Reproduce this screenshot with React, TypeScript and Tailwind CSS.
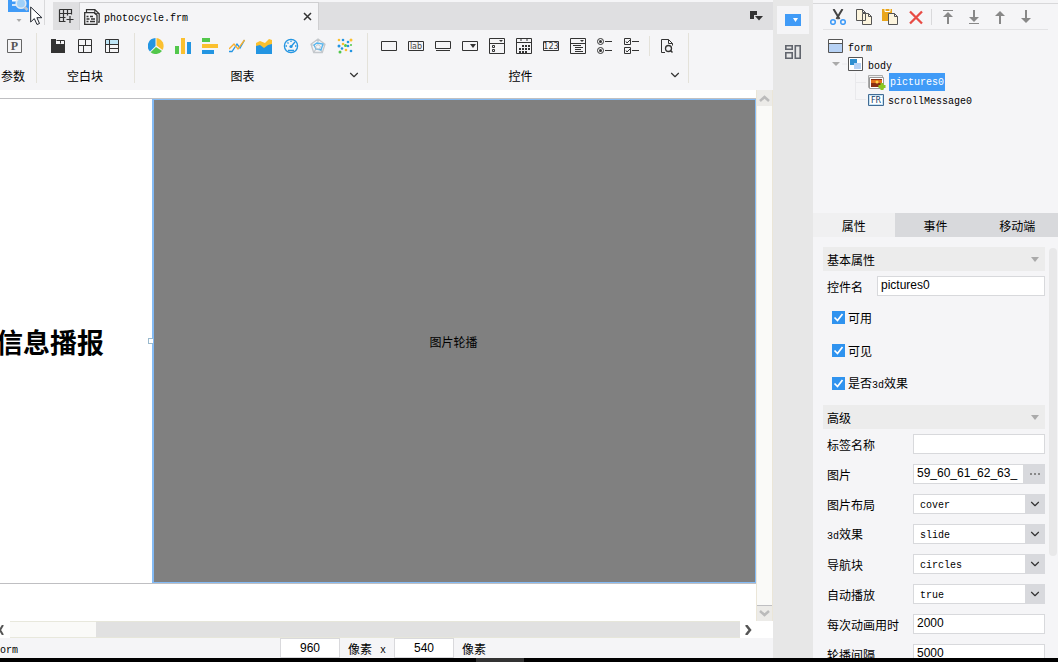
import React from "react";
import { ChevronDown } from "lucide-react";

type Kids = { children: React.ReactNode };

const Icon = ({ children }: Kids) => (
  <svg width="16" height="16" viewBox="0 0 16 16" fill="none" stroke="#333" className="block shrink-0">
    {children}
  </svg>
);

const Tool = ({ label, children }: Kids & { label: string }) => (
  <button type="button" aria-label={label} className="block size-4 shrink-0">
    <Icon>{children}</Icon>
  </button>
);

const Mono = ({ children }: Kids) => (
  <span className="font-['Liberation_Mono',monospace] text-[10px]">{children}</span>
);

function TopBar() {
  return (
    <div className="flex h-[30px] pt-0.5">
      <div className="relative -mt-0.5 flex w-[53px] shrink-0">
        <button type="button" aria-label="预览" className="ml-2 h-[23px] w-[21px]">
          <svg width="21" height="23" viewBox="0 0 21 23" className="block">
            <path d="M0 0h21v12H0z" fill="#409bf7" />
            <path d="M4 .8h6M4 5h6" stroke="#fff" strokeWidth="1.600" />
            <circle cx="13" cy="3.500" r="4.800" fill="#9fd0f8" stroke="#dfe9f2" strokeWidth="1.600" />
            <path d="M16.500 7l3 3" stroke="#b9c6d2" strokeWidth="2.500" />
            <path d="M8.500 19h5L11 22z" fill="#aaa" />
          </svg>
        </button>
        <div className="ml-[15px] h-[25px] w-px bg-[#d9d9db]" />
        <svg width="13" height="20" viewBox="0 0 13 20" className="absolute top-1.5 left-[30px]">
          <path d="M.7 1v15l3.600-3.400L7 18.500l2.500-1-2.600-5.800h5z" fill="#fff" stroke="#20252e" />
        </svg>
      </div>
      <button type="button" aria-label="新建" className="flex w-[26px] items-center justify-center bg-[#dfdfe1]">
        <Icon>
          <path d="M1.500 1.500h12v5M1.500 1.500v12h6M1.500 5.500h12M1.500 9.500h6M5.500 1.500v12M9.500 1.500v6M8.500 11.500h7M12 8v7" strokeWidth="1.200" />
        </Icon>
      </button>
      <div className="flex w-60 items-center border-x border-t border-[#cfcfd1] bg-[#f5f5f7] px-1">
        <Icon>
          <path d="M2.500 3V.7h8.300l4.400 4v8.500H14" strokeWidth="1.200" />
          <path d="M.7 3.700h9.500l2.800 2.600v9H.7z" strokeWidth="1.300" />
          <path d="M10.800.7v4h4.400" />
          <path d="M2.500 7.500h2M6 7.500h3M2.500 10h3M7 10h4M2.500 12.500h2M6 12.500h5" strokeWidth="1.400" />
        </Icon>
        <span className="ml-1 flex-1"><Mono>photocycle.frm</Mono></span>
        <button type="button" aria-label="关闭" className="mr-0.5">
          <svg width="9" height="9" viewBox="0 0 9 9" className="block"><path d="M1 1l7 7M8 1L1 8" stroke="#333" strokeWidth="1.500" /></svg>
        </button>
      </div>
      <div className="flex flex-1 items-center justify-end bg-[#dfdfe1] pr-2">
        <Tool label="窗口列表">
          <path d="M1 3h7v4H5v4H1z" fill="#333" stroke="none" />
          <path d="M6 8h8l-4 4.500z" fill="#333" stroke="none" />
        </Tool>
      </div>
    </div>
  );
}

function Group({ label, more, className, children }: Kids & { label: string; more?: boolean; className: string }) {
  return (
    <section className={`flex shrink-0 flex-col justify-between border-r border-[#e4e2da] ${className}`}>
      <div className="flex h-[26px] items-center gap-[11px]">{children}</div>
      <div className="flex h-4 items-center pr-1.5">
        <span className="flex-1 pt-0.5 text-center whitespace-nowrap">{label}</span>
        {more && <button type="button" aria-label={`更多${label}`}><ChevronDown size={14} color="#333" strokeWidth={2} /></button>}
      </div>
    </section>
  );
}

function Ribbon() {
  return (
    <div className="h-[60px] pt-[3px] pb-[7px]">
      <div className="flex h-full">
        <Group label="参数" className="w-[37px] pl-[6px] [&>div:last-child]:-ml-2.5">
          <Tool label="参数">
            <path d="M1.500 1.500h14v13h-14z" stroke="#666" />
            <text x="8.500" y="12" textAnchor="middle" fontSize="12" fontWeight="bold" fontFamily="Liberation Serif" fill="#555" stroke="none">P</text>
          </Tool>
        </Group>
        <Group label="空白块" className="w-[98px] pl-[13px] [&>div:last-child]:-ml-2">
          <Tool label="Tab块">
            <path d="M1 1h5v5h9v9H1z" fill="#333" stroke="none" />
            <path d="M6.500 2.500h8v4M10.500 2.500v3" />
          </Tool>
          <Tool label="绝对画布块">
            <path d="M1.500 1.500h13v13h-13zM1.500 7.500h13M8.500 1.500v6M6.500 7.500v7" />
          </Tool>
          <Tool label="报表块">
            <path d="M2 2h12v4H2z" fill="#bfe6f7" stroke="none" />
            <path d="M1.500 1.500h13v13h-13zM1.500 6.500h13M5.500 1.500v13M5.500 10.500h9" />
          </Tool>
        </Group>
        <Group label="图表" more className="w-[233px] pl-[13px] [&>div:last-child]:-ml-2.5">
          <Tool label="饼图">
            <g stroke="none"><path d="M7.500 8V0A8 8 0 0 0 2 13.500z" fill="#2395e2" /><path d="M8.500 7.500V0A8 8 0 0 1 14.500 12z" fill="#fbc02f" /><path d="M8 9l6 4a8 8 0 0 1-11.400 1.200z" fill="#52c74b" /></g>
          </Tool>
          <Tool label="柱形图">
            <g stroke="none"><path d="M0 8h4v8H0z" fill="#52c74b" /><path d="M6 0h4v16H6z" fill="#fbc02f" /><path d="M12 4h4v12h-4z" fill="#2395e2" /></g>
          </Tool>
          <Tool label="条形图">
            <g stroke="none"><path d="M0 0h8v4H0z" fill="#52c74b" /><path d="M0 6h16v4H0z" fill="#fbc02f" /><path d="M0 12h12v4H0z" fill="#2395e2" /></g>
          </Tool>
          <Tool label="折线图">
            <path d="M0 13.500h3L8 6l3 4 4.500-8" stroke="#2395e2" strokeWidth="1.300" /><path d="M0 11l5-5 4 5 6.500-9" stroke="#fbb02f" strokeWidth="1.300" />
          </Tool>
          <Tool label="面积图">
            <path d="M0 5l4-2 5 2 4-4 3 1v10H0z" fill="#fbc02f" stroke="none" /><path d="M0 8l4-1 4 3 4-3 4-1v10H0z" fill="#2395e2" stroke="none" />
          </Tool>
          <Tool label="仪表盘">
            <circle cx="8" cy="8" r="6.600" stroke="#2395e2" strokeWidth="1.300" />
            <path d="M4 8H2.500M13.500 8H12M8 2.500V4M4.500 4.500l1 1M12 4L8.500 8M5 12.500h6" stroke="#2395e2" strokeWidth="1.300" /><circle cx="8" cy="8.500" r="1.600" fill="#2395e2" stroke="none" />
          </Tool>
          <Tool label="雷达图">
            <path d="M8 1l7 5.200-2.700 8.300H3.700L1 6.200zM8 1v3M1 6.500l3 1M15 6.500l-3 1M4 14l2-3M12 14l-2-3" stroke="#c4c8cc" strokeWidth="1.300" /><path d="M7 5l6 1-2 6-5-1-2-4z" stroke="#55b5ee" strokeWidth="1.300" /><path d="M8 6.500l2.500 2-1 2.500h-3l-1-2.500z" stroke="#c4c8cc" />
          </Tool>
          <Tool label="散点图">
            <g stroke="none"><g fill="#2395e2"><circle cx="6" cy="2" r="1.300" /><circle cx="11" cy="4" r="1.300" /><circle cx="2" cy="8" r="1.500" /><circle cx="11" cy="8" r="1.300" /><circle cx="5" cy="10.500" r="1.300" /><circle cx="14" cy="13" r="1.300" /></g><g fill="#fbc02f"><circle cx="2" cy="2" r="1.300" /><circle cx="14" cy="2" r="1.500" /><circle cx="6" cy="6" r="1.300" /><circle cx="9" cy="12" r="1.300" /></g><g fill="#52c74b"><circle cx="8.500" cy="7.500" r="1.500" /><circle cx="3" cy="14" r="1.500" /><circle cx="14" cy="7" r="1" /></g></g>
          </Tool>
        </Group>
        <Group label="控件" more className="w-[321px] pl-[13px] [&>div:last-child]:-ml-2">
          <Tool label="文本框"><path d="M.5 3.500h15v9H.5z" /></Tool>
          <Tool label="标签"><path d="M.5 3.500h15v9H.5z" /><text x="8" y="11" textAnchor="middle" fontSize="8" fontFamily="DejaVu Sans" fill="#444" stroke="none">lab</text></Tool>
          <Tool label="按钮"><path d="M.5 3.500h15v7H.5zM1 12.500h14" /></Tool>
          <Tool label="下拉框"><path d="M.5 3.500h15v9H.5z" /><path d="M8 6h6l-3 4z" fill="#333" stroke="none" /></Tool>
          <Tool label="下拉复选框"><path d="M.5.5h15v15H.5zM.5 5.500h15M3.500 7.500h2v2h-2zM3.500 11.500h2v2h-2z" /><path d="M10 2h4l-2 2z" fill="#333" stroke="none" /></Tool>
          <Tool label="日期"><path d="M.5.5h15v15H.5zM.5 4.500h15M4 2h2M10 2h2" /><path d="M6 8h8M3 11h11M3 14h8" strokeWidth="2" strokeDasharray="2 1" /></Tool>
          <Tool label="数字"><path d="M.5 3.500h15v9H.5z" /><text x="8" y="11" textAnchor="middle" fontSize="8" fontFamily="DejaVu Sans" fill="#333" stroke="none">123</text></Tool>
          <Tool label="下拉树"><path d="M.5.5h15v15H.5zM.5 5.500h15M3 7.500h8M5 9.500h8M5 11.500h6M5 13.500h8" /><path d="M10 2h4l-2 2z" fill="#333" stroke="none" /></Tool>
          <Tool label="单选按钮组"><circle cx="3.500" cy="3.500" r="3" /><circle cx="3.500" cy="12.500" r="3" /><g fill="#333" stroke="none"><circle cx="3.500" cy="3.500" r="1.500" /><circle cx="3.500" cy="12.500" r="1.500" /></g><path d="M8 3.500h7M8 12.500h7" /></Tool>
          <Tool label="复选框组"><path d="M.5.5h6v6h-6zM.5 9.500h6v6h-6zM2 3.500l1 1.500 3-3M2 12.500l1 1.500 3-3M8 3.500h7M8 12.500h7" /></Tool>
          <div className="-ml-0.5 border-l border-[#e4e2da] py-0.5 pl-2.5">
            <Tool label="查询">
              <path d="M5 14.500H1.500v-13h7l4 4v2M8.500 1.500v4h4" /><circle cx="8.500" cy="10.500" r="3" strokeWidth="1.300" /><path d="M10.500 12.500l2 2" strokeWidth="1.500" />
            </Tool>
          </div>
        </Group>
      </div>
    </div>
  );
}

function Canvas() {
  return (
    <div className="flex min-h-0 flex-1 bg-white">
      <div className="flex min-w-0 flex-1 pt-2 pb-[37px]">
        <div className="flex min-w-0 flex-1 border-y border-[#bfbfc2]">
          <div className="flex w-[152px] shrink-0 items-center justify-end overflow-hidden pt-0.5 pr-12 text-[27px] font-bold whitespace-nowrap">
            信息播报
          </div>
          <div className="relative flex flex-1 items-center justify-center border border-l-2 border-[#84bbf5] bg-[#808080]">
            <span className="pt-0.5 pr-0.5">图片轮播</span>
            <span className="absolute top-1/2 -left-1.5 -mt-[3px] h-1.5 w-[5px] border border-r-0 border-[#9ab9cd] bg-white" />
          </div>
        </div>
      </div>
      <div className="flex w-[17px] flex-col border-x border-[#ebe6d8] bg-[#fafaf8]">
        <button type="button" aria-label="向上" className="flex h-4 items-center justify-center bg-[#ecebe8]">
          <svg width="11" height="7" viewBox="0 0 11 7"><path d="M1 6l4.500-4L10 6" fill="none" stroke="#bbb" strokeWidth="2.500" /></svg>
        </button>
        <div className="flex-1" />
        <button type="button" aria-label="向下" className="flex h-4 items-center justify-center border-t border-[#bfbfc2] bg-[#ecebe8]">
          <svg width="11" height="7" viewBox="0 0 11 7"><path d="M1 1l4.500 4L10 1" fill="none" stroke="#bbb" strokeWidth="2.500" /></svg>
        </button>
      </div>
    </div>
  );
}

function StatusBar() {
  return (
    <>
      <div className="flex h-[17px] bg-white">
        <button type="button" aria-label="向左" className="w-2.5">
          <svg width="6" height="10" viewBox="0 0 6 10"><path d="M3 0L0 5l3 5" fill="none" stroke="#555" strokeWidth="2" /></svg>
        </button>
        <div className="w-[86px] border-y border-[#e8e8dc] bg-[#fafaf8]" />
        <div className="flex-1 border-y border-[#e6e6da] bg-[#e1e1e1]" />
        <button type="button" aria-label="向右" className="flex w-[33px] items-center pl-[5px]">
          <svg width="7" height="10" viewBox="0 0 7 10"><path d="M1 0l4 5-4 5" fill="none" stroke="#555" strokeWidth="2.500" /></svg>
        </button>
      </div>
      <div className="flex h-5 items-center">
        <div className="w-[280px] pt-0.5"><Mono>orm</Mono></div>
        <input aria-label="宽度" defaultValue="960" className="h-5 w-[60px] border border-[#d9d9dc] bg-white text-center font-['Liberation_Sans',sans-serif]" />
        <span className="ml-2 pt-0.5">像素</span>
        <span className="mx-2 pt-0.5"><Mono>x</Mono></span>
        <input aria-label="高度" defaultValue="540" className="h-5 w-[60px] border border-[#d9d9dc] bg-white text-center font-['Liberation_Sans',sans-serif]" />
        <span className="ml-2 pt-0.5">像素</span>
      </div>
    </>
  );
}

function SideStrip() {
  return (
    <nav className="flex w-10 shrink-0 flex-col items-center gap-2 bg-[#e7e7e7] pt-1.5">
      <button type="button" aria-label="属性面板" className="flex h-7 w-8 items-center justify-center bg-[#f5f5f7]">
        <Icon><path d="M0 2h16v12H0z" fill="#409bf7" stroke="none" /><path d="M8 6h5l-2.500 4z" fill="#fff" stroke="none" /></Icon>
      </button>
      <button type="button" aria-label="组件面板" className="p-0.5">
        <Icon><path d="M.8 1.800h6.400v3.400H.8zM.8 8.800h6.400v5.400H.8zM10.300 1.800h4.900v12.400h-4.900z" stroke="#61656d" strokeWidth="1.600" /></Icon>
      </button>
    </nav>
  );
}

function TreeTools() {
  return (
    <div className="mx-2.5 flex h-[26px] items-center gap-2.5 border-b border-[#e3e3e5] pl-[7px]">
      <Tool label="剪切">
        <path d="M3.500 0l6 10M12.500 0l-6 10" stroke="#444" strokeWidth="2" /><circle cx="3" cy="13" r="2.300" stroke="#409bf7" strokeWidth="1.600" /><circle cx="13" cy="13" r="2.300" stroke="#409bf7" strokeWidth="1.600" />
      </Tool>
      <Tool label="复制">
        <path d="M.5.5h6l3 3v8h-9zM6.500.5v3h3M6.500 4.500h6l3 3v8h-9zM12.500 4.500v3h3" fill="#fdf5de" stroke="#555" />
      </Tool>
      <Tool label="粘贴">
        <path d="M0 0h10v12H0z" fill="#eaa61b" stroke="none" /><path d="M3 0v2.500h5V0" stroke="#fff" /><path d="M6.500 4.500h6l3 3v8h-9zM12.500 4.500v3h3" fill="#fdf5de" stroke="#555" />
      </Tool>
      <Tool label="删除"><path d="M2 2.500l12 12M14 2.500l-12 12" stroke="#e84b44" strokeWidth="2.300" /></Tool>
      <div className="-mx-[3px] h-4 w-px bg-[#d9d9db]" />
      <Tool label="置顶"><path d="M4 1.500h10" stroke="#888" /><path d="M9 15V6" stroke="#888" strokeWidth="2" /><path d="M4 8l5-5 5 5z" fill="#888" stroke="none" /></Tool>
      <Tool label="置底"><path d="M4 14.500h10" stroke="#888" /><path d="M9 1v9" stroke="#888" strokeWidth="2" /><path d="M4 8l5 5 5-5z" fill="#888" stroke="none" /></Tool>
      <Tool label="上移"><path d="M9 15V4" stroke="#888" strokeWidth="2" /><path d="M4 7l5-5 5 5z" fill="#888" stroke="none" /></Tool>
      <Tool label="下移"><path d="M9 1v11" stroke="#888" strokeWidth="2" /><path d="M4 9l5 5 5-5z" fill="#888" stroke="none" /></Tool>
    </div>
  );
}

function Tree() {
  return (
    <ul className="h-[183px] pt-[7px] pl-[15px] [&_span]:leading-5">
      <li className="flex h-[18px] items-center gap-1">
        <Icon><path d="M.5 1.500h14v13H.5z" fill="#fff" stroke="none" /><path d="M1 6h13v8H1z" fill="#b7d2f5" stroke="none" /><path d="M.5 1.500h14v13H.5zM1 5.500h13" stroke="#555" /></Icon>
        <span className="pt-0.5"><Mono>form</Mono></span>
      </li>
      <li className="flex h-[18px] items-center pl-1">
        <Icon><path d="M0 6h8l-4 4z" fill="#aaa" stroke="none" /><path d="M10 8h5" stroke="#e9e9ec" /></Icon>
        <Icon><path d="M.5 1.500h14v13H.5z" fill="#fff" stroke="#555" /><path d="M2 3h7v6H2z" fill="#2f8fd0" stroke="none" /><path d="M6 7h7v6H6z" fill="#b7d2f5" stroke="none" /></Icon>
        <span className="ml-1 pt-0.5"><Mono>body</Mono></span>
      </li>
      <li className="ml-[27px] flex h-[18px] items-center border-l border-[#e9e9ec]">
        <span className="h-px w-2.5 bg-[#e9e9ec]" />
        <svg width="18" height="16" viewBox="0 0 18 16" className="ml-0.5">
          <path d="M.5 1.500h14v12H.5z" fill="#eee" stroke="#aaa" /><path d="M1.500 3.500h14v11h-14z" fill="#fff" stroke="#999" /><path d="M3 5h11v8H3z" fill="#8a2f12" /><path d="M3 6h11v3H3z" fill="#e2701c" /><circle cx="9" cy="8" r="1.500" fill="#ffd24a" /><path d="M14 9v7M10.500 12.500h7" stroke="#8ac81f" strokeWidth="3" />
        </svg>
        <span className="ml-[3px] flex h-[18px] items-center bg-[#409bf7] px-px pt-0.5 text-white"><Mono>pictures0</Mono></span>
      </li>
      <li className="ml-[27px] flex h-[18px] items-center">
        <span className="h-[9px] w-[11px] self-start border-b border-l border-[#e9e9ec]" />
        <svg width="16" height="13" viewBox="0 0 16 13" className="ml-0.5">
          <path d="M.5.500h15v11H.5z" fill="#fff" stroke="#416b94" /><path d="M1.500 1.500h13v9h-13z" fill="none" stroke="#8fc5e8" strokeDasharray="1 1" /><text x="8" y="9" textAnchor="middle" fontSize="8" fontFamily="DejaVu Sans" fill="#123c68">FR</text>
        </svg>
        <span className="ml-1"><Mono>scrollMessage0</Mono></span>
      </li>
    </ul>
  );
}

const SectionHead = ({ title }: { title: string }) => (
  <button type="button" className="flex h-6 w-full items-center justify-between bg-[#ececec] pr-1.5 pl-1">
    <span className="pt-0.5">{title}</span>
    <svg width="8" height="5" viewBox="0 0 8 5"><path d="M0 0h8L4 5z" fill="#aaa" /></svg>
  </button>
);

const Check = ({ children }: Kids) => (
  <label className="flex h-[33px] items-center gap-[3px] pl-[9px]">
    <span className="grid size-[13px]">
      <input type="checkbox" defaultChecked className="peer col-start-1 row-start-1 size-[13px] appearance-none border border-[#2f93ef] bg-white checked:bg-[#2f93ef]" />
      <svg viewBox="0 0 13 13" className="pointer-events-none invisible col-start-1 row-start-1 size-[13px] peer-checked:visible"><path d="M2.500 6.500l3 3 5-6.500" fill="none" stroke="#fff" strokeWidth="1.700" /></svg>
    </span>
    <span className="pt-px">{children}</span>
  </label>
);

const Row = ({ id, label, children }: Kids & { id: string; label: React.ReactNode }) => (
  <div className="flex h-[30px] items-center pl-1">
    <label htmlFor={id} className="w-[86px] shrink-0 pt-0.5 whitespace-nowrap">{label}</label>
    {children}
  </div>
);

const field = "h-5 w-full min-w-0 border border-[#d8d9dc] bg-white px-[3px] pb-0.5 font-['Liberation_Sans',sans-serif] text-xs";

const Pick = ({ id, value }: { id: string; value: string }) => (
  <div className="grid h-5 flex-1">
    <select id={id} className="col-start-1 row-start-1 appearance-none border border-[#d8d9dc] bg-white pt-1 pl-1.5 font-['Liberation_Mono',monospace] text-[10px]">
      <option>{value}</option>
    </select>
    <span className="pointer-events-none col-start-1 row-start-1 flex w-5 items-center justify-center justify-self-end bg-[#d8d9dd]">
      <ChevronDown size={14} color="#333" />
    </span>
  </div>
);

function Properties() {
  return (
    <div className="flex min-h-0 flex-1 overflow-hidden pl-2.5">
      <div className="min-w-0 flex-1 pt-2.5">
        <SectionHead title="基本属性" />
        <div className="flex h-[30px] items-center pl-1">
          <label htmlFor="name" className="w-[50px] shrink-0 pt-0.5">控件名</label>
          <input id="name" defaultValue="pictures0" className={field} />
        </div>
        <Check>可用</Check>
        <Check>可见</Check>
        <Check>是否<Mono>3d</Mono>效果</Check>
        <div className="pt-[5px]"><SectionHead title="高级" /></div>
        <Row id="tag" label="标签名称"><input id="tag" className={field} /></Row>
        <Row id="pics" label="图片">
          <input id="pics" defaultValue="59_60_61_62_63_" ref={(el) => { if (el) el.scrollLeft = el.scrollWidth; }} className={field} />
          <button type="button" aria-label="选择图片" className="flex h-5 w-[21px] shrink-0 items-center justify-center bg-[#d8d9dd]">
            <svg width="10" height="2" viewBox="0 0 10 2"><path d="M0 0h2v2H0zM4 0h2v2H4zM8 0h2v2H8z" fill="#888" /></svg>
          </button>
        </Row>
        <Row id="layout" label="图片布局"><Pick id="layout" value="cover" /></Row>
        <Row id="effect" label={<><Mono>3d</Mono>效果</>}><Pick id="effect" value="slide" /></Row>
        <Row id="nav" label="导航块"><Pick id="nav" value="circles" /></Row>
        <Row id="auto" label="自动播放"><Pick id="auto" value="true" /></Row>
        <Row id="duration" label="每次动画用时"><input id="duration" defaultValue="2000" className={field} /></Row>
        <Row id="interval" label="轮播间隔"><input id="interval" defaultValue="5000" className={field} /></Row>
      </div>
      <div className="flex w-[13px] shrink-0 flex-col pt-[11px] pr-px pl-1">
        <div className="h-3/4 rounded-sm bg-[#e8e8e9]" />
      </div>
    </div>
  );
}

export default function App() {
  return (
    <div className="flex h-screen flex-col overflow-hidden bg-[#f5f5f7] font-['Noto_Sans_CJK_SC',sans-serif] text-xs text-black">
      <div className="flex min-h-0 flex-1">
        <main className="flex min-w-0 flex-1 flex-col">
          <TopBar />
          <Ribbon />
          <Canvas />
          <StatusBar />
        </main>
        <SideStrip />
        <aside className="flex w-[245px] shrink-0 flex-col">
          <div className="mt-[3px] border-t border-[#d8d8da]"><TreeTools /></div>
          <Tree />
          <div role="tablist" className="flex h-6 shrink-0">
            <button type="button" role="tab" aria-selected="true" className="flex-1 bg-[#f0f0f1] pt-0.5">属性</button>
            <button type="button" role="tab" aria-selected="false" className="flex-1 bg-[#d8d9dc] pt-0.5">事件</button>
            <button type="button" role="tab" aria-selected="false" className="flex-1 bg-[#d8d9dc] pt-0.5">移动端</button>
          </div>
          <Properties />
        </aside>
      </div>
      <div className="flex h-1 shrink-0 bg-black"><div className="ml-[45%] w-12 bg-[#333]" /></div>
    </div>
  );
}
